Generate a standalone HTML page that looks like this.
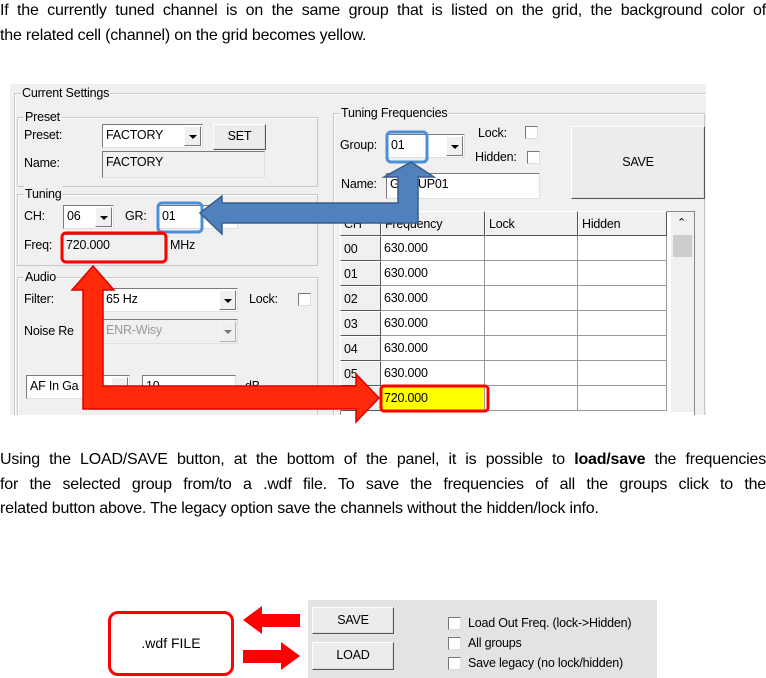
<!DOCTYPE html>
<html><head><meta charset="utf-8"><style>
*{margin:0;padding:0;box-sizing:border-box}
body{width:766px;height:678px;background:#fff;position:relative;overflow:hidden;font-family:"Liberation Sans",sans-serif}
.t{position:absolute;left:0;width:766px;font-size:16px;color:#000;white-space:nowrap;line-height:18px;letter-spacing:-0.2px}
.j{text-align:justify;text-align-last:justify}
.a{position:absolute}
.ui{font-family:"Liberation Sans",sans-serif;font-size:12.5px;color:#000;white-space:nowrap;letter-spacing:-0.2px}
.gb{position:absolute;border:1px solid #c8c8c8;box-shadow:1px 1px 0 #fff inset}
.lg{position:absolute;background:#f0f0f0;padding:0 1px;top:-9px;left:6px;line-height:16px}
.fld{position:absolute;background:#fff;border:1px solid #7a7a7a;border-right-color:#e0e0e0;border-bottom-color:#e0e0e0;padding-left:3px;line-height:20px}
.dis{background:#f0f0f0}
.dd{position:absolute;top:1px;right:1px;bottom:1px;width:17px;background:#f0f0f0;border:1px solid #fff;border-right-color:#777;border-bottom-color:#777}
.dd:after{content:"";position:absolute;left:4px;top:8px;border:4px solid transparent;border-top:4px solid #000;border-bottom:0}
.btn{position:absolute;background:#ececec;border:1px solid #fff;border-right-color:#555;border-bottom-color:#555;box-shadow:-1px -1px 0 #ddd inset;text-align:center}
.cb{position:absolute;width:13px;height:13px;background:#fff;border:1px solid #777;border-right-color:#ddd;border-bottom-color:#ddd}
.cell{position:absolute;border-right:1px solid #999;border-bottom:1px solid #999;line-height:24px;padding-left:3px;background:#fff}
.hc{background:#f0f0f0;border:1px solid #fff;border-right-color:#555;border-bottom-color:#555}
</style></head><body>
<div class="t j" style="top:2px">If the currently tuned channel is on the same group that is listed on the grid, the background color of</div>
<div class="t" style="top:27px">the related cell (channel) on the grid becomes yellow.</div>

<div class="a" style="left:10px;top:84px;width:696px;height:331px;background:#f0f0f0;overflow:hidden">
<div class="ui" style="position:absolute;left:0;top:0;width:696px;height:331px">
 <div class="gb" style="left:4px;top:9px;width:700px;height:340px"><div class="lg">Current Settings</div></div>
 <div class="gb" style="left:7px;top:33px;width:301px;height:70px"><div class="lg">Preset</div></div>
 <div class="a" style="left:14px;top:44px">Preset:</div>
 <div class="fld" style="left:92px;top:40px;width:101px;height:24px">FACTORY<div class="dd"></div></div>
 <div class="btn" style="left:203px;top:40px;width:53px;height:26px;line-height:22px">SET</div>
 <div class="a" style="left:14px;top:72px">Name:</div>
 <div class="fld dis" style="left:92px;top:67px;width:163px;height:27px">FACTORY</div>
 <div class="gb" style="left:7px;top:110px;width:301px;height:72px"><div class="lg">Tuning</div></div>
 <div class="a" style="left:14px;top:125px">CH:</div>
 <div class="fld" style="left:53px;top:121px;width:51px;height:24px">06<div class="dd"></div></div>
 <div class="a" style="left:115px;top:125px">GR:</div>
 <div class="fld" style="left:148px;top:121px;width:80px;height:24px">01</div>
 <div class="a" style="left:14px;top:154px">Freq:</div>
 <div class="fld dis" style="left:52px;top:150px;width:103px;height:27px">720.000</div>
 <div class="a" style="left:160px;top:154px">MHz</div>
 <div class="gb" style="left:7px;top:193px;width:301px;height:150px"><div class="lg">Audio</div></div>
 <div class="a" style="left:14px;top:208px">Filter:</div>
 <div class="fld" style="left:92px;top:204px;width:136px;height:24px">65 Hz<div class="dd"></div></div>
 <div class="a" style="left:239px;top:208px">Lock:</div>
 <div class="cb" style="left:288px;top:209px"></div>
 <div class="a" style="left:14px;top:240px">Noise Re</div>
 <div class="fld dis" style="left:92px;top:235px;width:136px;height:25px;color:#999">ENR-Wisy<div class="dd" style="opacity:.5"></div></div>
 <div class="fld" style="left:16px;top:291px;width:104px;height:24px">AF In Ga<div class="dd"></div></div>
 <div class="fld" style="left:132px;top:291px;width:94px;height:24px">10</div>
 <div class="a" style="left:235px;top:295px">dB</div>
 <div class="gb" style="left:323px;top:29px;width:372px;height:320px"><div class="lg">Tuning Frequencies</div></div>
 <div class="a" style="left:330px;top:54px">Group:</div>
 <div class="fld" style="left:377px;top:50px;width:78px;height:24px">01<div class="dd"></div></div>
 <div class="a" style="left:468px;top:42px">Lock:</div>
 <div class="cb" style="left:515px;top:42px"></div>
 <div class="a" style="left:465px;top:66px">Hidden:</div>
 <div class="cb" style="left:517px;top:67px"></div>
 <div class="btn" style="left:561px;top:42px;width:134px;height:73px;line-height:71px">SAVE</div>
 <div class="a" style="left:331px;top:93px">Name:</div>
 <div class="fld" style="left:376px;top:89px;width:154px;height:26px">GROUP01</div>
 <div class="a" style="left:330px;top:127px;width:355px;height:210px;background:#fff;border:1px solid #888"></div>
 <div class="cell hc" style="left:330px;top:127px;width:41px;height:25px">CH</div>
 <div class="cell hc" style="left:371px;top:127px;width:104px;height:25px">Frequency</div>
 <div class="cell hc" style="left:475px;top:127px;width:93px;height:25px">Lock</div>
 <div class="cell hc" style="left:568px;top:127px;width:89px;height:25px">Hidden</div>
 <div class="a" style="left:661px;top:128px;width:23px;height:200px;background:#f0f0f0"></div>
 <div class="a" style="left:667px;top:132px;font-size:11px">&#8963;</div>
 <div class="a" style="left:663px;top:151px;width:19px;height:22px;background:#cdcdcd"></div>
</div>
</div>

<div class="ui">
<div class="cell hc" style="left:340px;top:236px;width:41px;height:25px">00</div><div class="cell" style="left:381px;top:236px;width:104px;height:25px">630.000</div><div class="cell" style="left:485px;top:236px;width:93px;height:25px"></div><div class="cell" style="left:578px;top:236px;width:89px;height:25px"></div>
<div class="cell hc" style="left:340px;top:261px;width:41px;height:25px">01</div><div class="cell" style="left:381px;top:261px;width:104px;height:25px">630.000</div><div class="cell" style="left:485px;top:261px;width:93px;height:25px"></div><div class="cell" style="left:578px;top:261px;width:89px;height:25px"></div>
<div class="cell hc" style="left:340px;top:286px;width:41px;height:25px">02</div><div class="cell" style="left:381px;top:286px;width:104px;height:25px">630.000</div><div class="cell" style="left:485px;top:286px;width:93px;height:25px"></div><div class="cell" style="left:578px;top:286px;width:89px;height:25px"></div>
<div class="cell hc" style="left:340px;top:311px;width:41px;height:25px">03</div><div class="cell" style="left:381px;top:311px;width:104px;height:25px">630.000</div><div class="cell" style="left:485px;top:311px;width:93px;height:25px"></div><div class="cell" style="left:578px;top:311px;width:89px;height:25px"></div>
<div class="cell hc" style="left:340px;top:336px;width:41px;height:25px">04</div><div class="cell" style="left:381px;top:336px;width:104px;height:25px">630.000</div><div class="cell" style="left:485px;top:336px;width:93px;height:25px"></div><div class="cell" style="left:578px;top:336px;width:89px;height:25px"></div>
<div class="cell hc" style="left:340px;top:361px;width:41px;height:25px">05</div><div class="cell" style="left:381px;top:361px;width:104px;height:25px">630.000</div><div class="cell" style="left:485px;top:361px;width:93px;height:25px"></div><div class="cell" style="left:578px;top:361px;width:89px;height:25px"></div>
<div class="cell hc" style="left:340px;top:386px;width:41px;height:25px">06</div><div class="cell" style="left:381px;top:386px;width:104px;height:25px;background:#ffff00">720.000</div><div class="cell" style="left:485px;top:386px;width:93px;height:25px"></div><div class="cell" style="left:578px;top:386px;width:89px;height:25px"></div>
</div>
<div class="a" style="left:0;top:415px;width:766px;height:30px;background:#fff"></div>

<svg class="a" style="left:0;top:0" width="766" height="440">
 <rect x="158" y="203" width="44" height="29" rx="4" fill="none" stroke="#4a90d9" stroke-width="3"/>
 <rect x="387" y="132" width="40" height="30" rx="4" fill="none" stroke="#4a90d9" stroke-width="3"/>
 <polygon points="200,213 222,196 222,203 398,203 398,177 384,177 411,162 434,177 418,177 418,223 222,223 222,234" fill="#4f81bd" stroke="#385d8a" stroke-width="1.5"/>
 <rect x="62" y="233" width="104" height="29" rx="4" fill="none" stroke="#f00" stroke-width="3"/>
 <rect x="381" y="386" width="107" height="25" rx="3" fill="none" stroke="#f00" stroke-width="3"/>
 <polygon points="93,266 114,290 103,290 103,386 356,386 356,374 379,398 356,422 356,409 83,409 83,290 72,290" fill="#ff2a0a" stroke="#d00" stroke-width="1.5"/>
</svg>

<div class="t j" style="top:451px">Using the LOAD/SAVE button, at the bottom of the panel, it is possible to <b>load/save</b> the frequencies</div>
<div class="t j" style="top:476px">for the selected group from/to a .wdf file. To save the frequencies of all the groups click to the</div>
<div class="t" style="top:500px">related button above. The legacy option save the channels without the hidden/lock info.</div>

<div class="a" style="left:108px;top:611px;width:126px;height:65px;border:3px solid #f00;border-radius:10px;text-align:center;line-height:58px;font-size:14px">.wdf FILE</div>
<svg class="a" style="left:240px;top:600px" width="64" height="78">
 <polygon points="3,20 22,6 22,14 60,14 60,27 22,27 22,34" fill="#f00"/>
 <polygon points="60,56 41,42 41,50 3,50 3,63 41,63 41,70" fill="#f00"/>
</svg>
<div class="a ui" style="left:308px;top:600px;width:349px;height:78px;background:#e3e3e3">
 <div class="btn" style="left:4px;top:7px;width:82px;height:27px;line-height:24px">SAVE</div>
 <div class="btn" style="left:4px;top:42px;width:82px;height:28px;line-height:25px">LOAD</div>
 <div class="cb" style="left:140px;top:17px"></div><div class="a" style="left:160px;top:16px">Load Out Freq. (lock-&gt;Hidden)</div>
 <div class="cb" style="left:140px;top:37px"></div><div class="a" style="left:160px;top:36px">All groups</div>
 <div class="cb" style="left:140px;top:57px"></div><div class="a" style="left:160px;top:56px">Save legacy (no lock/hidden)</div>
</div>
</body></html>
